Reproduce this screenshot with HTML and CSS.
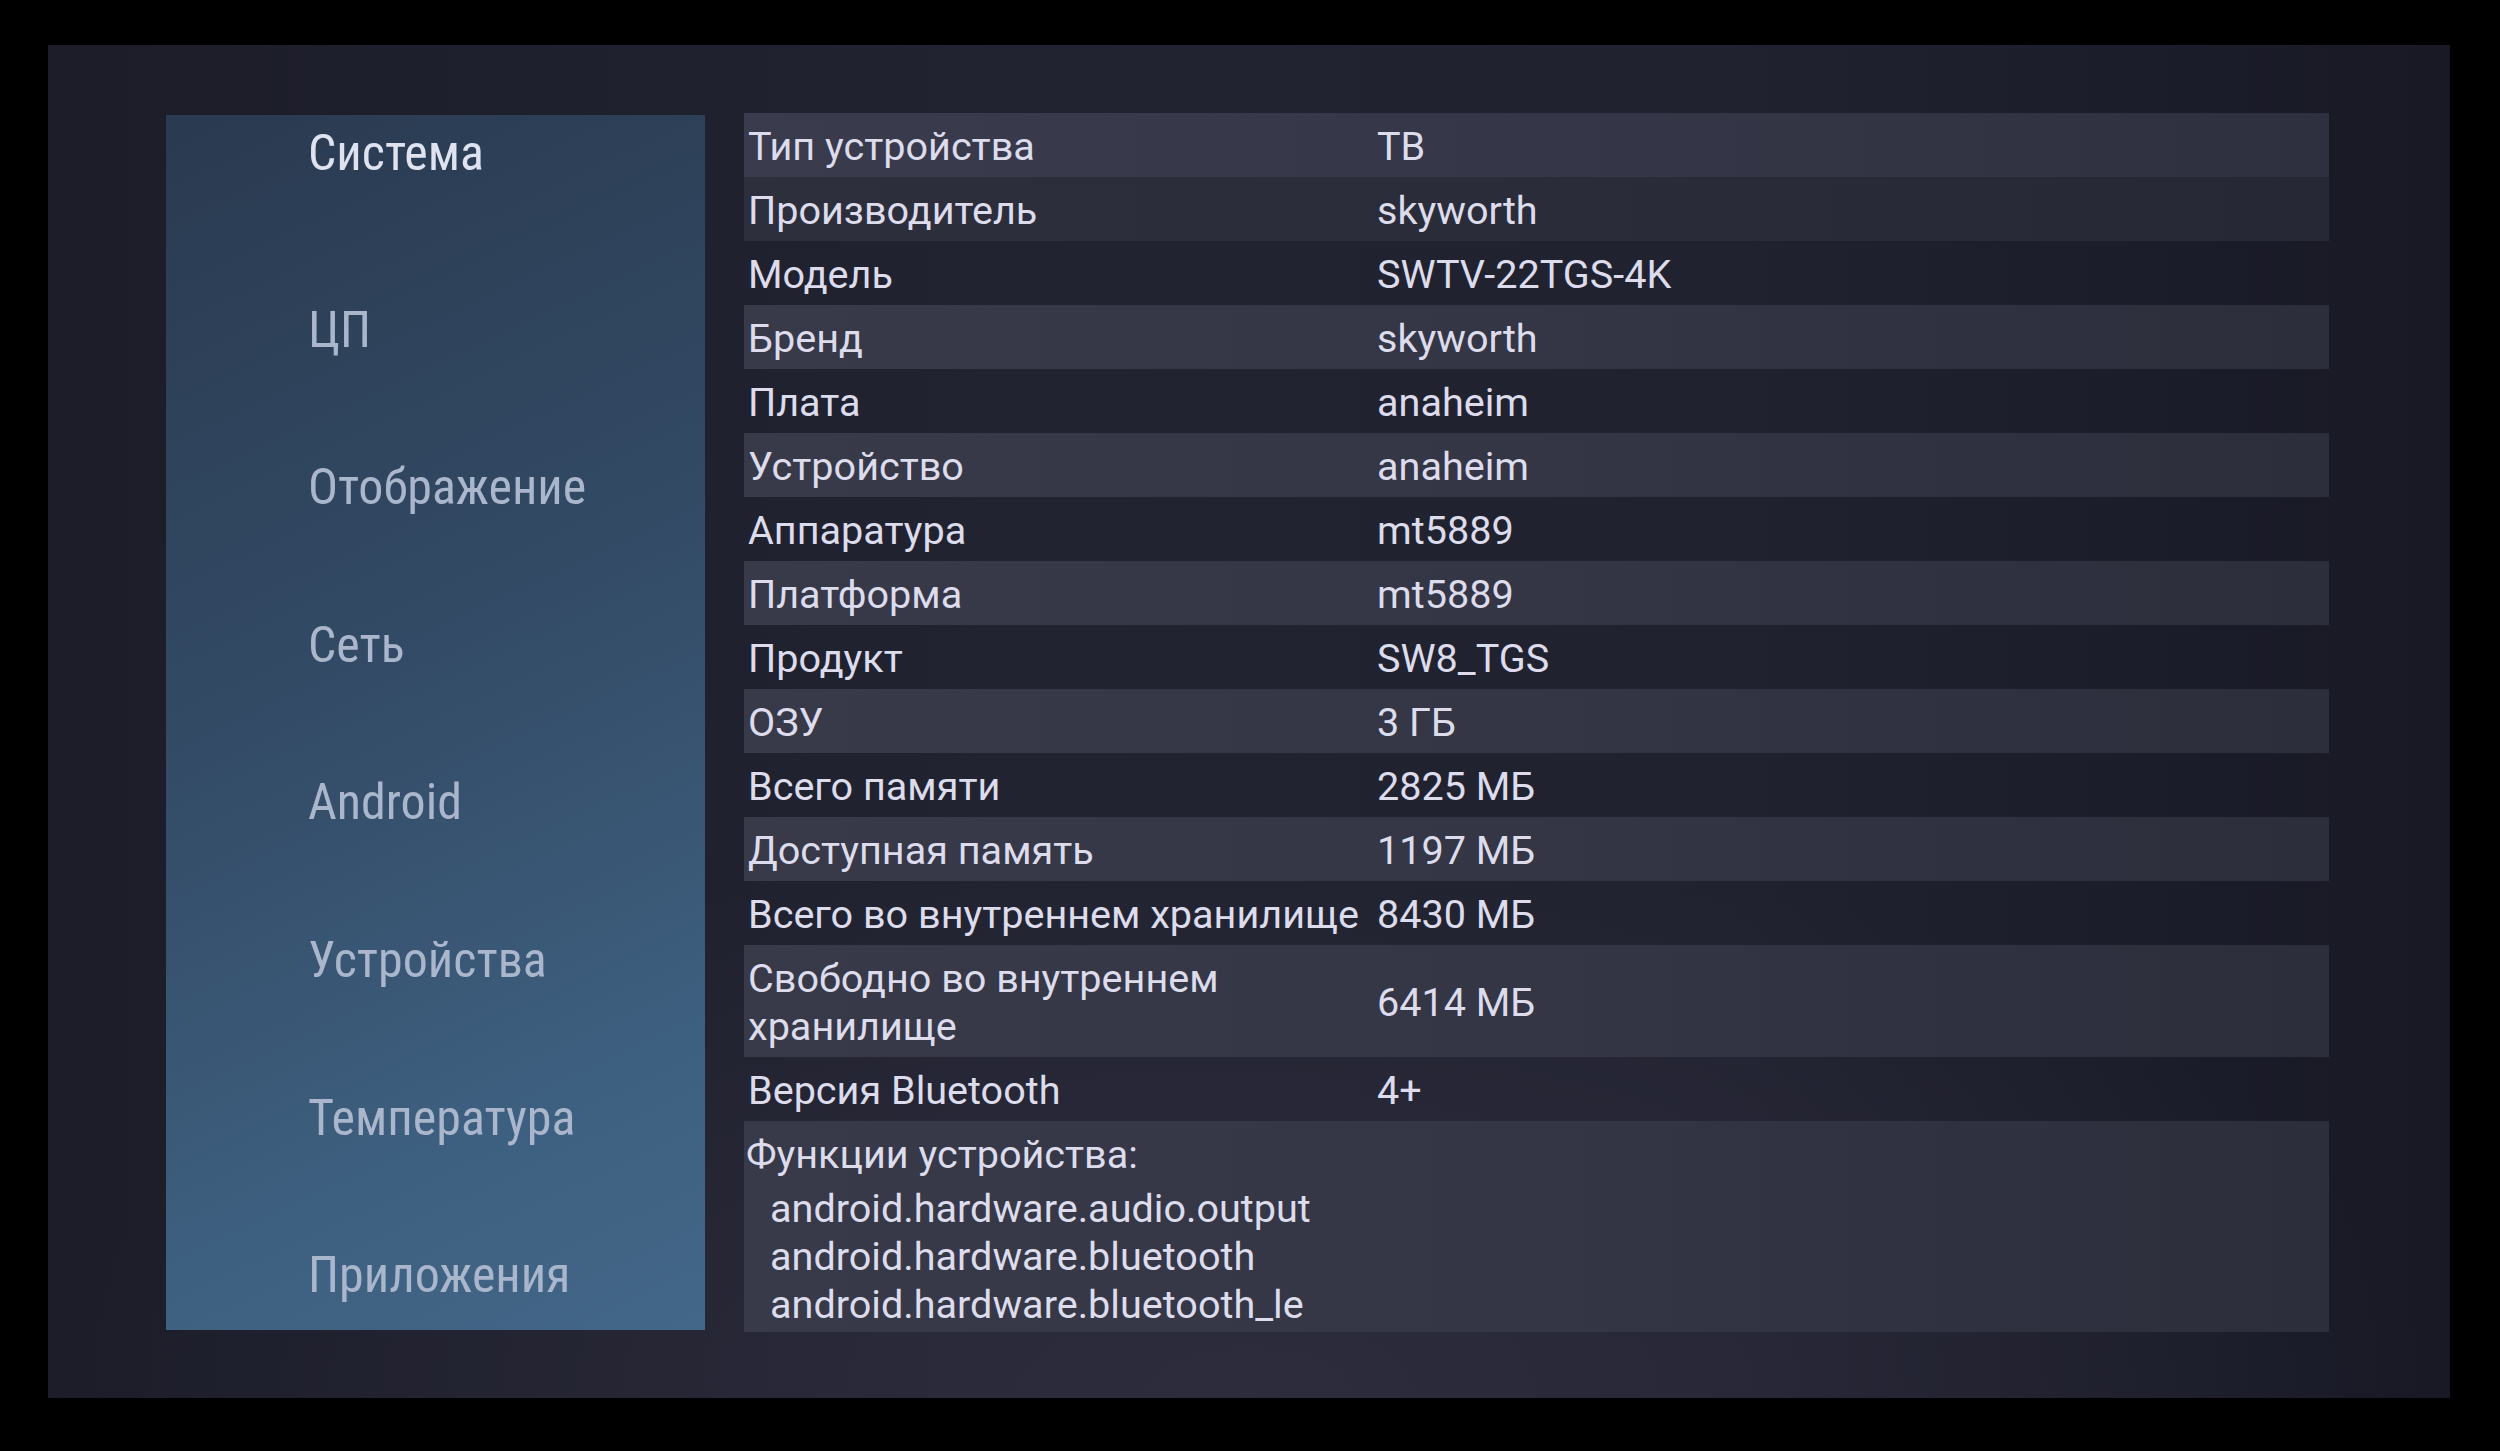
FILE: index.html
```html
<!DOCTYPE html>
<html lang="ru">
<head>
<meta charset="utf-8">
<title>Система</title>
<link rel="stylesheet" href="styles.css">
</head>
<body>
<div class="screen">
  <nav class="sidebar">
    <div class="nav-item active">Система</div>
    <div class="nav-item">ЦП</div>
    <div class="nav-item">Отображение</div>
    <div class="nav-item">Сеть</div>
    <div class="nav-item">Android</div>
    <div class="nav-item">Устройства</div>
    <div class="nav-item">Температура</div>
    <div class="nav-item">Приложения</div>
  </nav>
  <div class="table">
    <div class="row first"><div class="label">Тип устройства</div><div class="value">ТВ</div></div>
    <div class="row second"><div class="label">Производитель</div><div class="value">skyworth</div></div>
    <div class="row"><div class="label">Модель</div><div class="value">SWTV-22TGS-4K</div></div>
    <div class="row light"><div class="label">Бренд</div><div class="value">skyworth</div></div>
    <div class="row"><div class="label">Плата</div><div class="value">anaheim</div></div>
    <div class="row light"><div class="label">Устройство</div><div class="value">anaheim</div></div>
    <div class="row"><div class="label">Аппаратура</div><div class="value">mt5889</div></div>
    <div class="row light"><div class="label">Платформа</div><div class="value">mt5889</div></div>
    <div class="row"><div class="label">Продукт</div><div class="value">SW8_TGS</div></div>
    <div class="row light"><div class="label">ОЗУ</div><div class="value">3 ГБ</div></div>
    <div class="row"><div class="label">Всего памяти</div><div class="value">2825 МБ</div></div>
    <div class="row light"><div class="label">Доступная память</div><div class="value">1197 МБ</div></div>
    <div class="row"><div class="label">Всего во внутреннем хранилище</div><div class="value">8430 МБ</div></div>
    <div class="row light"><div class="label">Свободно во внутреннем хранилище</div><div class="value">6414 МБ</div></div>
    <div class="row"><div class="label">Версия Bluetooth</div><div class="value">4+</div></div>
    <div class="row light features">
      <div class="feat-title">Функции устройства:</div>
      <div class="feat">android.hardware.audio.output</div>
      <div class="feat">android.hardware.bluetooth</div>
      <div class="feat">android.hardware.bluetooth_le</div>
    </div>
  </div>
</div>
</body>
</html>
```
FILE: styles.css
```css
html, body {
  margin: 0;
  padding: 0;
  background: #000;
}
body {
  width: 2500px;
  height: 1451px;
  overflow: hidden;
  font-family: Roboto, "Noto Sans", sans-serif;
}
.screen {
  margin: 45px 0 0 48px;
  width: 2402px;
  height: 1353px;
  box-sizing: border-box;
  padding: 68px 0 0 118px;
  display: flex;
  align-items: flex-start;
  gap: 39px;
  background:
    radial-gradient(ellipse 70% 60% at 50% 100%, rgba(54, 52, 72, 0.55), rgba(0, 0, 0, 0) 70%),
    linear-gradient(90deg, #1c1d29 0%, #222331 40%, #212230 70%, #181925 100%);
}
.sidebar {
  margin-top: 2px;
  width: 539px;
  height: 1215px;
  box-sizing: border-box;
  padding: 8px 0 0 142px;
  display: flex;
  flex-direction: column;
  gap: 97.6px;
  background: linear-gradient(155deg, #2a3a50 0%, #334b66 45%, #3e6080 80%, #436789 100%);
}
.nav-item {
  font-family: "Roboto Condensed", Roboto, sans-serif;
  font-stretch: condensed;
  font-size: 50px;
  line-height: 60px;
  height: 60px;
  color: #a9b6cb;
  white-space: nowrap;
}
.nav-item.active {
  color: #dfe2ef;
  margin-bottom: 19px;
}
.table {
  width: 1585px;
  display: flex;
  flex-direction: column;
}
.row {
  display: flex;
  align-items: center;
  padding: 10px 0 6px;
  font-size: 39.6px;
  line-height: 48px;
  color: #dcdcec;
}
.row.first {
  background: linear-gradient(90deg, #3a3b4c 0%, #353647 50%, #2f303f 100%);
}
.row.second {
  background: linear-gradient(90deg, #2e2f3d 0%, #2b2c3a 50%, #272835 100%);
}
.row.light {
  background: linear-gradient(90deg, #383949 0%, #343545 50%, #2d2e3c 100%);
}
.label {
  width: 633px;
  box-sizing: border-box;
  padding-left: 4px;
  flex: none;
}
.value {
  flex: 1;
}
.features {
  flex-direction: column;
  align-items: stretch;
  padding: 10px 0 3px;
}
.feat-title {
  padding-left: 2px;
  margin-bottom: 6px;
}
.feat {
  padding-left: 26px;
}
```
